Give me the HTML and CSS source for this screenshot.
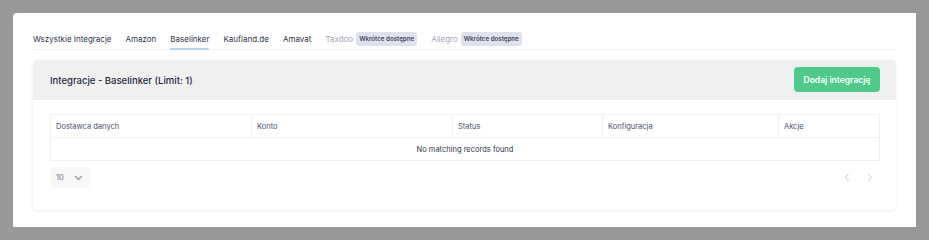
FILE: index.html
```html
<!DOCTYPE html>
<html lang="pl">
<head>
    <meta charset="UTF-8">
    <meta name="viewport" content="width=device-width, initial-scale=1.0">
    <title>Integracje</title>
    <link rel="stylesheet" href="styles.css">
</head>
<body>
    <div class="page">
        <ul class="tabs">
            <li class="tab">Wszystkie Integracje</li>
            <li class="tab">Amazon</li>
            <li class="tab active">Baselinker</li>
            <li class="tab">Kaufland.de</li>
            <li class="tab">Amavat</li>
            <li class="tab disabled">Taxdoo <span class="badge">Wkrótce dostępne</span></li>
            <li class="tab disabled">Allegro <span class="badge">Wkrótce dostępne</span></li>
        </ul>

        <div class="card">
            <div class="card-header">
                <h2>Integracje - Baselinker (Limit: 1)</h2>
                <button class="add-btn">Dodaj integrację</button>
            </div>
            <div class="card-body">
                <table class="data-table">
                    <thead>
                        <tr>
                            <th class="col-provider">Dostawca danych</th>
                            <th class="col-account">Konto</th>
                            <th class="col-status">Status</th>
                            <th class="col-config">Konfiguracja</th>
                            <th>Akcje</th>
                        </tr>
                    </thead>
                    <tbody>
                        <tr>
                            <td colspan="5" class="empty">No matching records found</td>
                        </tr>
                    </tbody>
                </table>

                <div class="table-footer">
                    <div class="page-size">
                        <span>10</span>
                        <svg width="9" height="6" viewBox="0 0 9 6"><path d="M1 1l3.5 3.5L8 1" fill="none" stroke="#8a90a6" stroke-width="1.1"/></svg>
                    </div>
                    <div class="pager">
                        <svg width="6" height="9" viewBox="0 0 6 9"><path d="M4.5 1L1.5 4.5 4.5 8" fill="none" stroke="#c4c7d2" stroke-width="1"/></svg>
                        <svg width="6" height="9" viewBox="0 0 6 9"><path d="M1.5 1l3 3.5-3 3.5" fill="none" stroke="#c4c7d2" stroke-width="1"/></svg>
                    </div>
                </div>
            </div>
        </div>
    </div>
</body>
</html>
```

FILE: styles.css
```css
* {
    margin: 0;
    padding: 0;
    box-sizing: border-box;
    font-family: Inter, "Noto Sans", sans-serif;
}

body {
    background-color: #999999;
    padding: 13px 13px 13px 13px;
    height: 240px;
    overflow: hidden;
}

/* Biały panel */
.page {
    background-color: #ffffff;
    border-radius: 4px 0 0 0;
    height: 214px;
    width: 903px;
    padding: 16px 20px 0 20px;
    box-shadow: inset 0 0 2px rgba(0, 0, 0, 0.06);
}

/* Zakładki */
.tabs {
    list-style: none;
    display: flex;
    gap: 14px;
    border-bottom: 1px solid #f1f2f5;
    height: 21px;
}

.tab {
    font-size: 8px;
    color: #2f3447;
    padding-top: 5px;
    height: 21px;
    display: flex;
    align-items: flex-start;
    gap: 3px;
}

.tab.active {
    border-bottom: 2px solid #b7d3f5;
}

.tab.disabled {
    color: #a3a7ba;
}

.badge {
    background-color: #dfe2ec;
    color: #3f4560;
    font-size: 6.2px;
    font-weight: 600;
    padding: 3px 3px;
    border-radius: 3px;
    margin-top: -2px;
    line-height: 8px;
}

/* Karta */
.card {
    margin-top: 10px;
    border-radius: 5px;
    box-shadow: 0 1px 4px rgba(0, 0, 0, 0.07);
    height: 150px;
    background-color: #ffffff;
}

.card-header {
    background-color: #f0f0f0;
    border-radius: 5px 5px 0 0;
    height: 40px;
    padding: 0 16px 0 17px;
    display: flex;
    justify-content: space-between;
    align-items: center;
}

.card-header h2 {
    font-size: 9.5px;
    font-weight: 500;
    color: #262b40;
}

.add-btn {
    background-color: #4ecb88;
    color: #ffffff;
    border: none;
    border-radius: 4px;
    font-size: 8.5px;
    font-weight: 600;
    width: 86px;
    height: 25px;
    margin-top: -1px;
}

.card-body {
    padding: 14px 16px 0 17px;
}

/* Tabela */
.data-table {
    width: 100%;
    border-collapse: collapse;
    font-size: 7.5px;
    color: #4b5068;
}

.data-table th,
.data-table td {
    border: 1px solid #f0f1f4;
    height: 23px;
    text-align: left;
    font-weight: 400;
    padding: 0 5px;
}

.col-provider { width: 201px; }
.col-account { width: 201px; }
.col-status { width: 150px; }
.col-config { width: 176px; }

.data-table td.empty {
    text-align: center;
    color: #2f3447;
}

.table-footer {
    display: flex;
    justify-content: space-between;
    align-items: center;
    margin-top: 6px;
}

.page-size {
    background-color: #f8f8f9;
    border-radius: 4px;
    width: 40px;
    height: 21px;
    display: flex;
    align-items: center;
    gap: 10px;
    padding-left: 6px;
    font-size: 7.5px;
    color: #6a7088;
}

.pager {
    display: flex;
    gap: 17px;
    padding-right: 7px;
}
```
